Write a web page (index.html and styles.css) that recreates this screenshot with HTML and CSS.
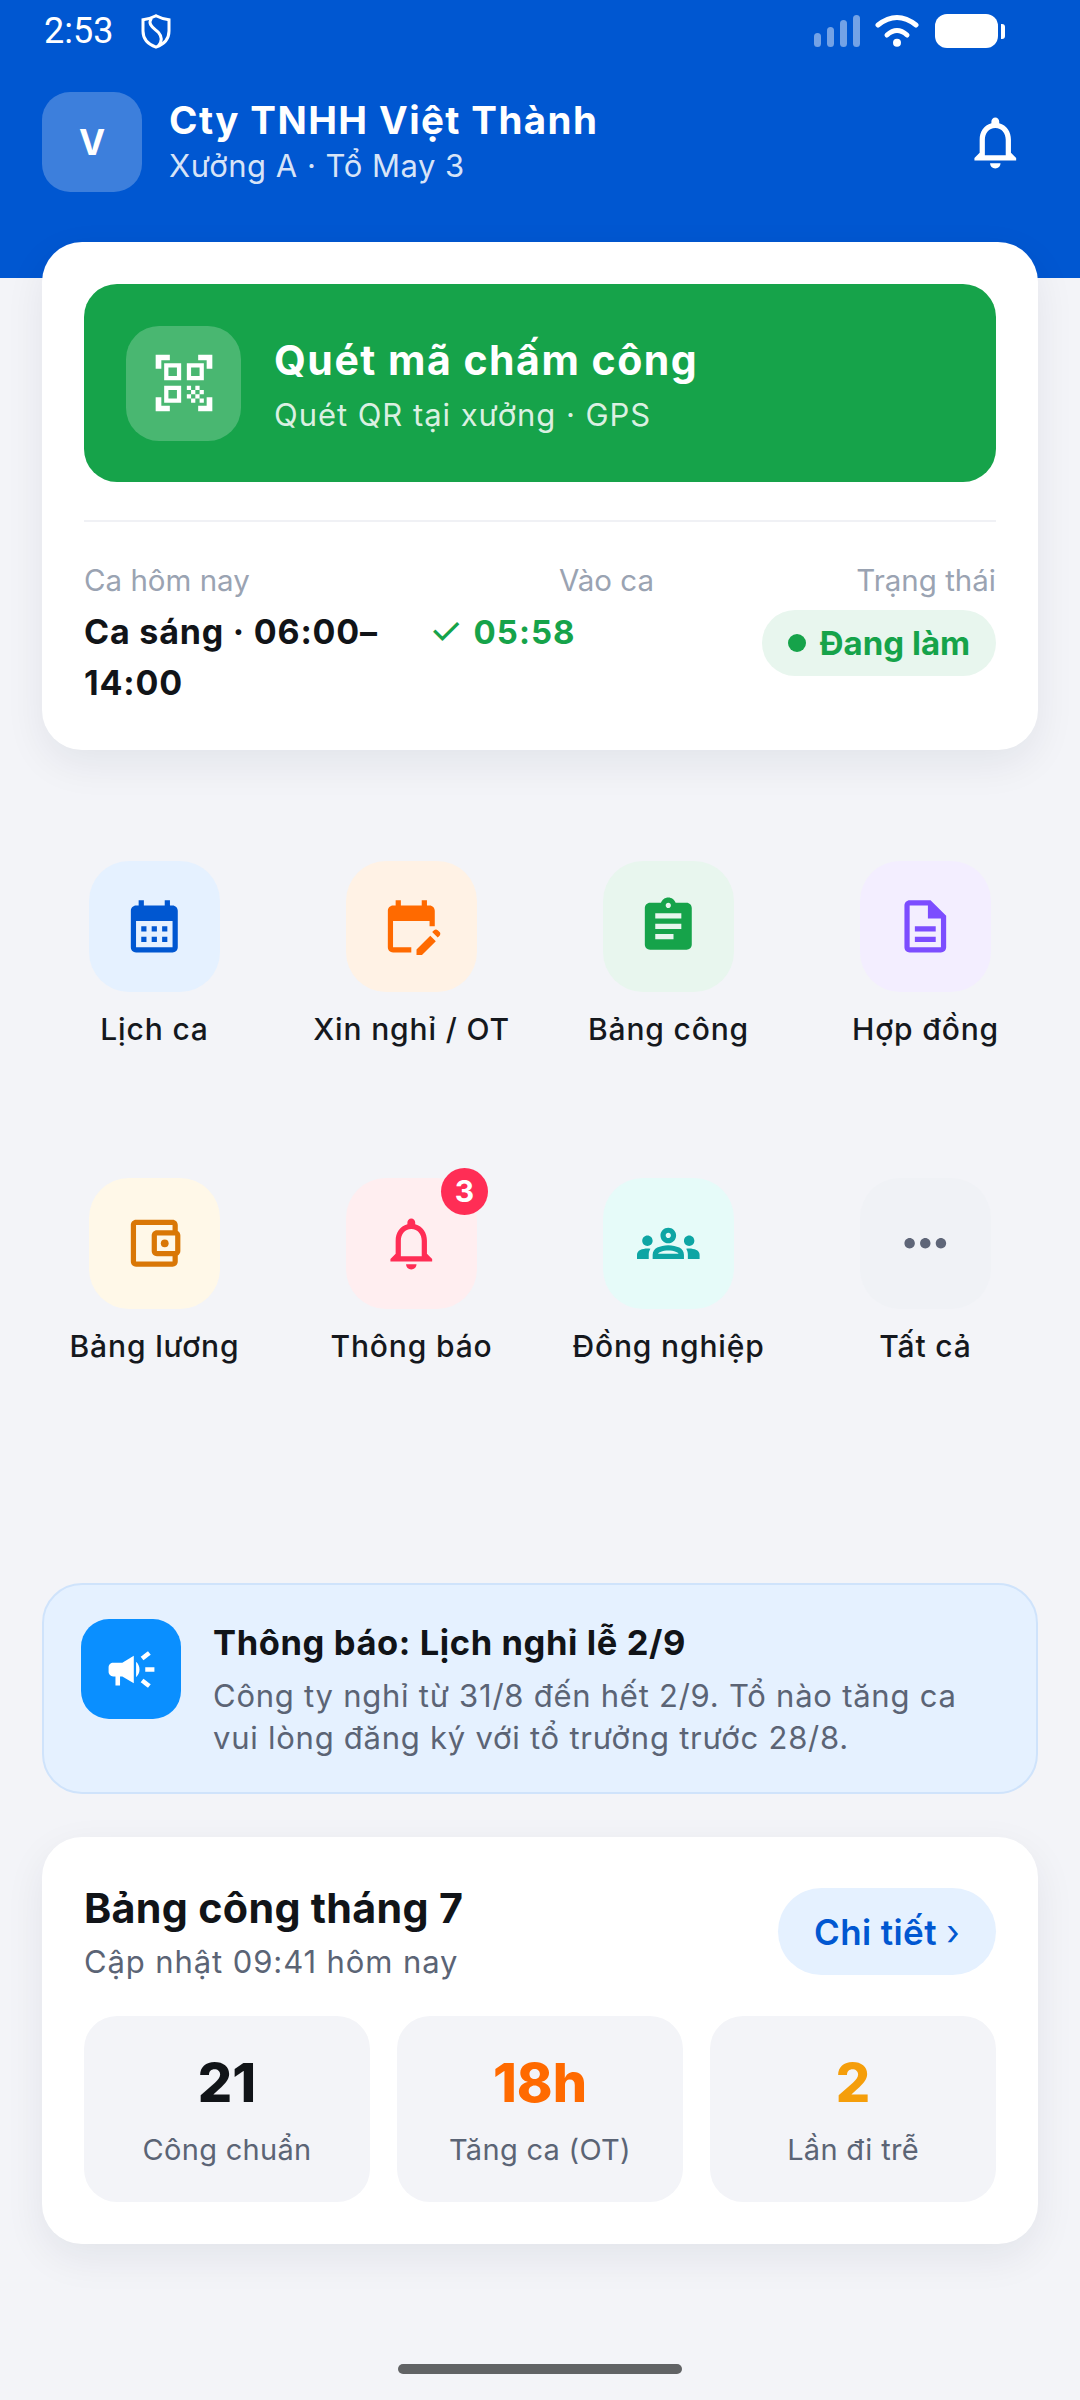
FILE: index.html
```html
<!DOCTYPE html>
<html lang="vi">
<head>
<meta charset="utf-8">
<title>Cty TNHH Việt Thành</title>
<link rel="stylesheet" href="styles.css">
</head>
<body>
<div class="page">
  <header class="top">
    <div class="status">
      <div class="status-left">
        <span class="clock">2:53</span>
        <svg class="shield" viewBox="0 0 30 35"><path d="M15 1.8C10.5 4.2 6.5 5.2 2 5.8V17c0 8.5 5.5 13.5 13 16.2C22.5 30.500 28 25.500 28 17V5.800C23.500 5.200 19.500 4.200 15 1.800Z"/><path d="M10.500 4C6 11 13 14 17.500 18.500 21 22.500 21 27.500 17.500 32"/></svg>
      </div>
      <div class="status-right">
        <div class="signal"><i class="b1"></i><i class="b2"></i><i class="b3"></i><i class="b4"></i></div>
        <svg class="wifi" viewBox="0 0 44 34"><path d="M3 11Q22-4 41 11"/><path d="M12 21Q22 12 32 21"/><circle cx="22" cy="28.700" r="4"/></svg>
        <div class="battery"></div>
        <div class="nub"></div>
      </div>
    </div>
    <div class="brand">
      <div class="avatar">V</div>
      <div class="brand-text">
        <div class="company">Cty TNHH Việt Thành</div>
        <div class="place">Xưởng A · Tổ May 3</div>
      </div>
      <svg class="icon head-bell" viewBox="0 0 24 24"><path d="M12 22c1.100 0 2-.9 2-2h-4c0 1.100.9 2 2 2zm6-6v-5c0-3.070-1.630-5.640-4.500-6.320V4c0-.83-.67-1.500-1.500-1.500s-1.500.67-1.500 1.500v.68C7.640 5.360 6 7.920 6 11v5l-2 2v1h16v-1l-2-2zm-2 1H8v-6c0-2.480 1.510-4.500 4-4.500s4 2.020 4 4.500v6z"/></svg>
    </div>
  </header>

  <main class="content">
    <section class="card shift-card">
      <div class="scan">
        <div class="scan-icon">
          <svg class="qr" viewBox="0 0 24 24"><path d="M9.500 6.500v3h-3v-3h3M11 5H5v6h6V5zm-1.500 9.500v3h-3v-3h3M11 13H5v6h6v-6zm6.500-6.500v3h-3v-3h3M19 5h-6v6h6V5zm-6 8h1.500v1.500H13V13zm1.500 1.500H16V16h-1.500v-1.500zM16 13h1.500v1.500H16V13zm-3 3h1.500v1.500H13V16zm1.500 1.500H16V19h-1.500v-1.500zM16 16h1.500v1.500H16V16zm1.500-1.500H19V16h-1.500v-1.500zm0 3H19V19h-1.500v-1.500zM22 7h-2V4h-3V2h5v5zm0 15v-5h-2v3h-3v2h5zM2 22h5v-2H4v-3H2v5zM2 2v5h2V4h3V2H2z"/></svg>
        </div>
        <div class="scan-text">
          <div class="scan-title">Quét mã chấm công</div>
          <div class="scan-sub">Quét QR tại xưởng · GPS</div>
        </div>
      </div>
      <div class="shift">
        <div>
          <div class="label">Ca hôm nay</div>
          <div class="value">Ca sáng · 06:00–14:00</div>
        </div>
        <div>
          <div class="label right">Vào ca</div>
          <div class="value green"><span class="tick">✓</span>05:58</div>
        </div>
        <div class="status-col">
          <div class="label right">Trạng thái</div>
          <div class="pill"><i class="dot"></i>Đang làm</div>
        </div>
      </div>
    </section>

    <nav class="apps">
      <a class="app"><span class="tile t-blue"><svg class="icon" viewBox="0 0 24 24"><path d="M19 4h-1V2h-2v2H8V2H6v2H5C3.890 4 3.010 4.900 3.010 6L3 20c0 1.100.89 2 2 2h14c1.100 0 2-.9 2-2V6c0-1.100-.9-2-2-2zm0 16H5V10h14v10zM9 14H7v-2h2v2zm4 0h-2v-2h2v2zm4 0h-2v-2h2v2zm-8 4H7v-2h2v2zm4 0h-2v-2h2v2zm4 0h-2v-2h2v2z"/></svg></span><span class="app-name">Lịch ca</span></a>
      <a class="app"><span class="tile t-orange"><svg class="icon" viewBox="0 0 24 24"><path d="M5 10h14v2h2V6c0-1.100-.9-2-2-2h-1V2h-2v2H8V2H6v2H5c-1.110 0-1.990.9-1.990 2L3 20c0 1.100.89 2 2 2h7v-2H5V10zm17.840 4.220-.71-.71c-.39-.39-1.020-.39-1.410 0l-.71.71 2.120 2.120.71-.71c.39-.39.39-1.020 0-1.410zM14 20.900V23h2.100l5.300-5.300-2.120-2.120L14 20.900z"/></svg></span><span class="app-name">Xin nghỉ / OT</span></a>
      <a class="app"><span class="tile t-green"><svg class="icon" viewBox="0 0 24 24"><path d="M19 3h-4.180C14.400 1.840 13.300 1 12 1c-1.300 0-2.400.84-2.820 2H5c-1.100 0-2 .9-2 2v14c0 1.100.9 2 2 2h14c1.100 0 2-.9 2-2V5c0-1.100-.9-2-2-2zm-7 0c.55 0 1 .45 1 1s-.45 1-1 1-1-.45-1-1 .45-1 1-1zm2 14H7v-2h7v2zm3-4H7v-2h10v2zm0-4H7V7h10v2z"/></svg></span><span class="app-name">Bảng công</span></a>
      <a class="app"><span class="tile t-purple"><svg class="icon" viewBox="0 0 24 24"><path d="M8 16h8v2H8zm0-4h8v2H8zm6-10H6c-1.100 0-2 .9-2 2v16c0 1.100.89 2 1.990 2H18c1.100 0 2-.9 2-2V8l-6-6zm4 18H6V4h7v5h5v11z"/></svg></span><span class="app-name">Hợp đồng</span></a>
      <a class="app"><span class="tile t-amber"><svg class="icon" viewBox="0 0 24 24"><path d="M21 7.280V5c0-1.100-.9-2-2-2H5c-1.110 0-2 .9-2 2v14c0 1.100.89 2 2 2h14c1.100 0 2-.9 2-2v-2.280c.59-.35 1-.98 1-1.720V9c0-.74-.41-1.380-1-1.720zM20 9v6h-7V9h7zM5 19V5h14v2h-6c-1.100 0-2 .9-2 2v6c0 1.100.9 2 2 2h6v2H5z"/><circle cx="16" cy="12" r="1.500"/></svg></span><span class="app-name">Bảng lương</span></a>
      <a class="app"><span class="tile t-red"><svg class="icon" viewBox="0 0 24 24"><path d="M12 22c1.100 0 2-.9 2-2h-4c0 1.100.9 2 2 2zm6-6v-5c0-3.070-1.630-5.640-4.500-6.320V4c0-.83-.67-1.500-1.500-1.500s-1.500.67-1.500 1.500v.68C7.640 5.360 6 7.920 6 11v5l-2 2v1h16v-1l-2-2zm-2 1H8v-6c0-2.480 1.510-4.500 4-4.500s4 2.020 4 4.500v6z"/></svg><b class="badge">3</b></span><span class="app-name">Thông báo</span></a>
      <a class="app"><span class="tile t-teal"><svg class="icon" viewBox="0 0 24 24"><path d="M4 13c1.100 0 2-.9 2-2 0-1.100-.9-2-2-2s-2 .9-2 2c0 1.100.9 2 2 2zm1.130 1.100C4.760 14.040 4.390 14 4 14c-.99 0-1.930.21-2.780.58C.48 14.900 0 15.620 0 16.430V18h4.500v-1.610c0-.83.23-1.610.63-2.290zM20 13c1.100 0 2-.9 2-2 0-1.100-.9-2-2-2s-2 .9-2 2c0 1.100.9 2 2 2zm4 3.430c0-.81-.48-1.530-1.220-1.850C21.930 14.210 20.990 14 20 14c-.39 0-.76.04-1.130.1.4.68.63 1.460.63 2.290V18H24v-1.570zm-7.760-2.780C15.070 13.130 13.630 12.750 12 12.750c-1.630 0-3.070.39-4.240.9C6.680 14.130 6 15.210 6 16.390V18h12v-1.610c0-1.180-.68-2.260-1.760-2.740zM8.070 16c.09-.23.13-.39.91-.69.97-.38 1.990-.56 3.020-.56s2.050.18 3.020.56c.77.3.81.46.91.69H8.070zM12 8c.55 0 1 .45 1 1s-.45 1-1 1-1-.45-1-1 .45-1 1-1m0-2c-1.660 0-3 1.340-3 3s1.340 3 3 3 3-1.340 3-3-1.340-3-3-3z"/></svg></span><span class="app-name">Đồng nghiệp</span></a>
      <a class="app"><span class="tile t-grey"><svg class="icon" viewBox="0 0 24 24"><path d="M6 10c-1.100 0-2 .9-2 2s.9 2 2 2 2-.9 2-2-.9-2-2-2zm12 0c-1.100 0-2 .9-2 2s.9 2 2 2 2-.9 2-2-.9-2-2-2zm-6 0c-1.100 0-2 .9-2 2s.9 2 2 2 2-.9 2-2-.9-2-2-2z"/></svg></span><span class="app-name">Tất cả</span></a>
    </nav>

    <section class="notice">
      <div class="notice-icon">
        <svg class="horn" viewBox="0 0 24 24"><path d="M18 11v2h4v-2h-4zm-2 6.610c.96.71 2.210 1.650 3.200 2.390.4-.53.8-1.070 1.200-1.600-.99-.74-2.240-1.680-3.200-2.400-.4.54-.8 1.080-1.200 1.610zM20.400 5.600c-.4-.53-.8-1.070-1.200-1.600-.99.74-2.240 1.680-3.200 2.400.4.53.8 1.070 1.200 1.600.96-.72 2.210-1.650 3.200-2.400zM4 9c-1.100 0-2 .9-2 2v2c0 1.100.9 2 2 2h1v4h2v-4h1l5 3V6L8 9H4zm11.500 3c0-1.330-.58-2.530-1.500-3.350v6.690c.92-.81 1.500-2.010 1.500-3.340z"/></svg>
      </div>
      <div>
        <div class="notice-title">Thông báo: Lịch nghỉ lễ 2/9</div>
        <div class="notice-body">Công ty nghỉ từ 31/8 đến hết 2/9. Tổ nào tăng ca vui lòng đăng ký với tổ trưởng trước 28/8.</div>
      </div>
    </section>

    <section class="card summary">
      <div class="summary-head">
        <div>
          <div class="summary-title">Bảng công tháng 7</div>
          <div class="summary-sub">Cập nhật 09:41 hôm nay</div>
        </div>
        <div class="detail">Chi tiết&nbsp;<span class="chev">›</span></div>
      </div>
      <div class="stats">
        <div class="stat"><div class="num">21</div><div class="cap">Công chuẩn</div></div>
        <div class="stat"><div class="num orange">18h</div><div class="cap">Tăng ca (OT)</div></div>
        <div class="stat"><div class="num amber">2</div><div class="cap">Lần đi trễ</div></div>
      </div>
    </section>
  </main>

  <div class="home-bar"></div>
</div>
</body>
</html>
```
FILE: styles.css
```css
* { box-sizing: border-box; }
html, body { margin: 0; padding: 0; }
body {
  width: 1080px;
  height: 2400px;
  overflow: hidden;
  background: #f3f4f8;
  color: #111418;
  font-family: Inter, "Noto Sans", sans-serif;
}
.page { position: relative; width: 1080px; height: 2400px; }

.top { height: 278px; background: #0057d1; color: #fff; }
.status {
  height: 62px;
  display: flex;
  justify-content: space-between;
  align-items: center;
  padding: 0 75px 0 44px;
}
.status-left { display: flex; align-items: center; gap: 28px; }
.clock { font-family: Roboto, sans-serif; font-size: 36px; line-height: 62px; }
.shield { width: 30px; height: 35px; fill: none; stroke: #fff; stroke-width: 3; }
.status-right { display: flex; align-items: center; }
.signal { display: flex; align-items: flex-end; gap: 6px; height: 32px; margin-right: 15px; }
.signal i { display: block; width: 7px; border-radius: 4px; background: rgba(255,255,255,.45); }
.b1 { height: 14px; }
.b2 { height: 20px; }
.b3 { height: 27px; }
.b4 { height: 32px; }
.wifi { width: 44px; height: 34px; margin-right: 16px; fill: #fff; }
.wifi path { fill: none; stroke: #fff; stroke-width: 5; stroke-linecap: round; }
.battery { width: 63px; height: 34px; background: #fff; border-radius: 12px; }
.nub { width: 4px; height: 15px; margin-left: 3px; background: #fff; border-radius: 0 3px 3px 0; }

.brand { display: flex; align-items: center; padding: 30px 53px 0 42px; }
.avatar {
  width: 100px;
  height: 100px;
  border-radius: 28px;
  background: rgba(255,255,255,.24);
  display: flex;
  align-items: center;
  justify-content: center;
  font-size: 35px;
  font-weight: 700;
}
.brand-text { flex: 1; margin-left: 27px; }
.company { font-size: 38.5px; line-height: 44px; font-weight: 700; letter-spacing: 1.4px; }
.place { margin-top: 4px; font-size: 31px; line-height: 40px; letter-spacing: .5px; color: rgba(255,255,255,.85); }
.icon { width: 62.6px; height: 62.6px; fill: currentColor; display: block; }
.head-bell { color: #fff; }

.content { padding: 0 42px; margin-top: -36px; }
.card { background: #fff; border-radius: 40px; box-shadow: 0 14px 40px rgba(20,30,60,.07); }
.shift-card { height: 508px; padding: 42px; }
.scan {
  height: 198px;
  background: #16a34a;
  border-radius: 33px;
  color: #fff;
  padding: 0 42px;
  display: flex;
  align-items: center;
  gap: 33px;
}
.scan-icon {
  width: 115px;
  height: 115px;
  border-radius: 33px;
  background: rgba(255,255,255,.22);
  display: flex;
  align-items: center;
  justify-content: center;
}
.qr { width: 68px; height: 68px; fill: #fff; }
.scan-text { margin-top: 4.5px; }
.scan-title { font-size: 41px; line-height: 48px; font-weight: 700; letter-spacing: 1.5px; }
.scan-sub { font-size: 31px; line-height: 40px; margin-top: 11.5px; letter-spacing: .95px; color: rgba(255,255,255,.85); }

.shift {
  margin-top: 38px;
  padding-top: 39px;
  border-top: 2px solid #f0f1f5;
  display: grid;
  grid-template-columns: 322px 225px 1fr;
  column-gap: 23px;
}
.label { font-size: 29.5px; line-height: 38px; color: #9aa3b2; }
.right { text-align: right; }
.value { margin-top: 8px; font-size: 34px; line-height: 50.5px; font-weight: 700; letter-spacing: .8px; }
.green { color: #16a34a; font-size: 33px; letter-spacing: 1px; }
.tick { font-weight: 400; margin-right: 10px; font-size: 38px; line-height: 0; }
.status-col { display: flex; flex-direction: column; align-items: flex-end; }
.pill {
  margin-top: 10.5px;
  height: 66px;
  width: 234px;
  border-radius: 33px;
  background: #e8f6ee;
  color: #16a34a;
  font-size: 33px;
  font-weight: 700;
  display: flex;
  align-items: center;
  justify-content: center;
  gap: 14px;
}
.dot { width: 18px; height: 18px; border-radius: 50%; background: #16a34a; }

.apps {
  margin: 111px -16px 0;
  display: grid;
  grid-template-columns: repeat(4, 257px);
  grid-auto-rows: 316.5px;
}
.app { display: flex; flex-direction: column; align-items: center; }
.tile {
  position: relative;
  width: 131px;
  height: 131px;
  border-radius: 40px;
  display: flex;
  align-items: center;
  justify-content: center;
}
.app-name { margin-top: 17px; font-size: 30px; line-height: 40px; font-weight: 550; letter-spacing: .85px; color: #15181d; }
.t-blue { background: #e5f1ff; color: #0057d1; }
.t-orange { background: #fff2e5; color: #ff6a00; }
.t-green { background: #e8f6ee; color: #16a34a; }
.t-purple { background: #f3eeff; color: #7c4dff; }
.t-amber { background: #fff8e8; color: #d97706; }
.t-red { background: #ffeef0; color: #ff2d55; }
.t-teal { background: #e6fbf9; color: #0ea5a4; }
.t-grey { background: #f0f2f6; color: #5f6678; }
.badge {
  position: absolute;
  top: -10px;
  right: -11px;
  width: 47px;
  height: 47px;
  border-radius: 50%;
  background: #ff2d55;
  color: #fff;
  font-size: 30px;
  font-weight: 700;
  display: flex;
  align-items: center;
  justify-content: center;
}

.notice {
  margin-top: 89px;
  height: 211px;
  border: 2px solid #cfe3fb;
  border-radius: 40px;
  background: #e5f1ff;
  padding: 34px 37px;
  display: flex;
  gap: 32px;
}
.notice-icon {
  flex: none;
  width: 100px;
  height: 100px;
  border-radius: 28px;
  background: #0a8fff;
  display: flex;
  align-items: center;
  justify-content: center;
}
.horn { width: 55px; height: 55px; fill: #fff; }
.notice-title { font-size: 34.5px; line-height: 48px; font-weight: 700; letter-spacing: .6px; }
.notice-body { margin-top: 8px; font-size: 31px; line-height: 42px; color: #5b6475; letter-spacing: .75px; }

.summary { margin-top: 43px; height: 407px; padding: 42px 42px 0; }
.summary-head { display: flex; justify-content: space-between; align-items: center; height: 105px; }
.summary-title { font-size: 41.25px; line-height: 52px; font-weight: 700; letter-spacing: .3px; }
.summary-sub { font-size: 31px; line-height: 40px; margin-top: 8px; color: #5b6475; letter-spacing: .9px; }
.detail {
  width: 218px;
  height: 87px;
  border-radius: 44px;
  background: #e5f1ff;
  color: #0057d1;
  font-size: 35px;
  font-weight: 600;
  letter-spacing: .4px;
  display: flex;
  align-items: center;
  justify-content: center;
}
.chev { font-weight: 400; }
.stats { margin-top: 32px; display: grid; grid-template-columns: repeat(3, 1fr); gap: 27px; }
.stat { height: 186px; border-radius: 33px; background: #f3f4f8; text-align: center; padding-top: 36px; }
.num { font-size: 54px; line-height: 62px; font-weight: 800; }
.orange { color: #ff6a00; }
.amber { color: #f59e0b; }
.cap { margin-top: 16px; font-size: 29px; line-height: 40px; color: #5b6475; letter-spacing: .3px; }

.home-bar {
  position: absolute;
  left: 398px;
  top: 2364px;
  width: 284px;
  height: 10px;
  border-radius: 5px;
  background: #616365;
}
```
